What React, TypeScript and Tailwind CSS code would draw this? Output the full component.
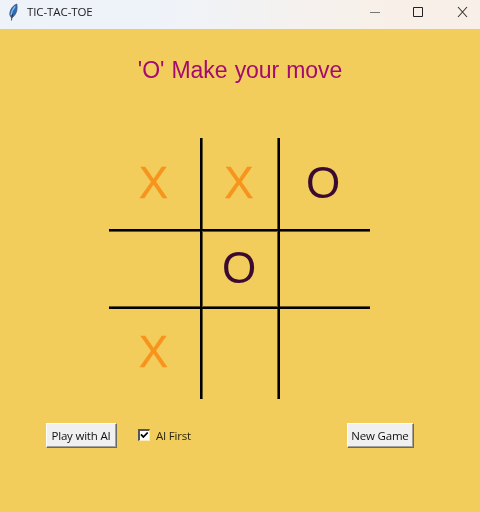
import React from "react";

type Mark = "X" | "O";

const marks: { mark: Mark; cell: string }[] = [
  { mark: "X", cell: "col-start-1 row-start-1 pr-0.5 pb-0.5" },
  { mark: "X", cell: "col-start-3 row-start-1 pr-0.5 pb-0.5" },
  { mark: "O", cell: "col-start-5 row-start-1 pr-1 pb-0.5" },
  { mark: "O", cell: "col-start-3 row-start-3 pr-0.5 pb-0.5" },
  { mark: "X", cell: "col-start-1 row-start-5 pr-0.5 pb-1" },
];

function Feather() {
  return (
    <svg width="12" height="18" viewBox="0 0 12 18" className="shrink-0">
      <path d="M8.8 1C4.8 2.6 1.6 6.8 1.8 11.8L3.4 14.8C7.4 13 10 7.6 8.8 1Z" fill="#2b6cc0" stroke="#46515e" strokeWidth="0.8" />
      <path d="M7.2 3.4C5 5.8 3.5 8.6 3 11.8" fill="none" stroke="#8fc1ee" strokeWidth="1.4" />
      <path d="M4.8 11C4.2 13 3.7 15 3.4 17.5" fill="none" stroke="#29323d" strokeWidth="0.9" />
    </svg>
  );
}

function TitleBar() {
  return (
    <header className="flex h-[29px] shrink-0 bg-linear-to-r from-[#eef3fa] from-30% to-[#f8f0e8] to-80%">
      <div className="flex flex-1 pl-2 pt-[3px]">
        <Feather />
        <span className="ml-[7px] h-[18px] text-[11.5px] leading-[18px] tracking-[-0.1px] text-[#222]">TIC-TAC-TOE</span>
      </div>
      <svg width="110" height="24" viewBox="0 0 110 24" fill="none">
        <path d="M0 12.5H10" stroke="#777" />
        <path d="M43.5 7.5H52.5V16.5H43.5Z" stroke="#222" />
        <path d="M88 7L97 17M97 7L88 17" stroke="#333" strokeWidth="1.1" />
      </svg>
    </header>
  );
}

function TkButton({ label, width }: { label: string; width: string }) {
  return (
    <button
      className={`${width} flex h-[25px] items-center justify-center whitespace-nowrap border border-t-white border-l-white border-r-[#696969] border-b-[#696969] bg-[#f0f0f0] pr-px text-[11.5px] leading-[22px] tracking-[-0.2px] text-[#111] shadow-[inset_-1px_-1px_0_#a0a0a0]`}
    >
      {label}
    </button>
  );
}

function Board() {
  return (
    <div className="ml-[109px] mt-[53px] grid h-[261px] w-[261px] grid-cols-[91px_3px_74px_3px_90px] grid-rows-[91px_3px_74px_3px_90px]">
      {marks.map(({ mark, cell }) => (
        <div
          key={cell}
          className={`${cell} flex items-center justify-center font-['Liberation_Sans',Arial,sans-serif] text-[44px] leading-none ${mark === "X" ? "text-[#f7941d] [-webkit-text-stroke:0.3px_#f7941d]" : "text-[#3b0a30]"}`}
        >
          {mark}
        </div>
      ))}
      <div className="col-start-2 row-span-full border-r border-[#675720] bg-black mix-blend-darken" />
      <div className="col-start-4 row-span-full border-l border-[#675720] bg-black mix-blend-darken" />
      <div className="col-span-full row-start-2 border-b border-[#675720] bg-black mix-blend-darken" />
      <div className="col-span-full row-start-4 border-t border-[#675720] bg-black mix-blend-darken" />
    </div>
  );
}

export default function App() {
  return (
    <div className="flex h-[512px] w-[480px] flex-col overflow-hidden bg-[#f2cd5c] font-['Open_Sans','Noto_Sans',sans-serif]">
      <TitleBar />
      <h1 className="mt-[27px] h-[29px] text-center font-['Liberation_Sans',Arial,sans-serif] text-[23px] leading-[29px] tracking-[-0.1px] [word-spacing:1px] text-[#a40a72]">
        'O' Make your move
      </h1>
      <Board />
      <div className="mt-6 flex h-[25px] pl-[46px]">
        <TkButton label="Play with AI" width="w-[71px]" />
        <label className="ml-[21px] flex items-center text-[11.5px] leading-[22px] tracking-[-0.2px] text-[#2a2510]">
          <span className="mr-1.5 mb-0.5 h-3 w-3 border-t-2 border-l-2 border-r border-b border-t-[#555] border-l-[#555] border-r-[#faeeb0] border-b-[#faeeb0] bg-white">
            <svg width="9" height="9" viewBox="0 0 9 9" fill="none">
              <path d="M1 3.3L3.4 6L7.7 1.5" stroke="#000" strokeWidth="1.8" />
            </svg>
          </span>
          AI First
        </label>
        <div className="ml-auto mr-[66px]">
          <TkButton label="New Game" width="w-[67px]" />
        </div>
      </div>
    </div>
  );
}
